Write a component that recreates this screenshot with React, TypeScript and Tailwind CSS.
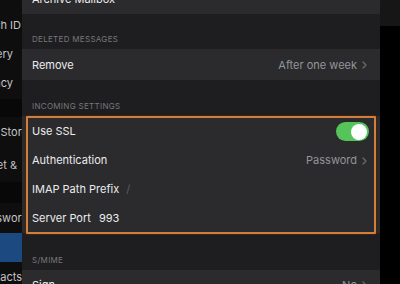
import React from "react";

const Chevron = () => (
  <svg width="5" height="8" viewBox="0 0 5 8" className="ml-[5px]">
    <path d="M1 1 L4 4 L1 7" fill="none" stroke="#6c6c70" strokeWidth="1.2" strokeLinecap="round" strokeLinejoin="round" />
  </svg>
);

const Header = ({ text, h }: { text: string; h: string }) => (
  <div className={`${h} flex items-end pb-[6px] pl-[10px] text-[8px] leading-[8px] tracking-[0.3px] text-[#77777b]`}>
    {text}
  </div>
);

const SideItem = ({ text, h, mr, bg = "" }: { text: string; h: string; mr: string; bg?: string }) => (
  <div className={`${h} ${bg} flex items-center justify-end overflow-hidden`}>
    <span className={`whitespace-nowrap text-[11px] text-[#c4c4c7] ${mr}`}>{text}</span>
  </div>
);

export default function App() {
  return (
    <div
      className="flex h-[284px] w-[400px] overflow-hidden bg-black"
      style={{ fontFamily: "Inter, 'Noto Sans', sans-serif" }}
    >
      {/* sidebar */}
      <div className="flex w-[22px] shrink-0 flex-col bg-[#0e0e0e]">
        <div className="h-[10px] shrink-0" />
        <SideItem text="Touch ID" h="h-[30px] shrink-0" mr="mr-[1px]" />
        <SideItem text="Battery" h="h-[28px] shrink-0" mr="mr-[9px]" />
        <SideItem text="Privacy" h="h-[31px] shrink-0" mr="mr-[9px]" />
        <div className="h-[18px] shrink-0 bg-[#080808]" />
        <SideItem text="App Store" h="h-[31px] shrink-0" mr="-mr-[6px]" />
        <SideItem text="Wallet &" h="h-[34px] shrink-0" mr="mr-[5px]" />
        <div className="h-[21px] shrink-0 bg-[#080808]" />
        <SideItem text="Passwords" h="h-[30px] shrink-0" mr="-mr-[12px]" />
        <div className="h-[29px] shrink-0 bg-[#1c4a80]" />
        <SideItem text="Contacts" h="h-[30px] shrink-0" mr="mr-0" />
      </div>

      {/* main */}
      <div className="relative flex w-[358px] shrink-0 flex-col bg-[#1e1e20] text-[11px] text-[#ececee]">
        <div className="-mt-[16px] flex h-[30px] shrink-0 items-center bg-[#2b2b2d] pl-[10px]">Archive Mailbox</div>
        <Header text="DELETED MESSAGES" h="h-[35px] shrink-0" />
        <div className="flex h-[31px] shrink-0 items-center justify-between bg-[#2b2b2d] pl-[10px] pr-[13px] pt-[1px]">
          <span>Remove</span>
          <span className="flex items-center text-[#949499]">
            After one week
            <Chevron />
          </span>
        </div>
        <Header text="INCOMING SETTINGS" h="h-[36px] shrink-0" />
        <div className="flex shrink-0 flex-col bg-[#2b2b2d] pt-[1px]">
          <div className="flex h-[29px] items-center justify-between pl-[10px] pr-[11px]">
            <span>Use SSL</span>
            <div className="flex h-[19px] w-[33px] items-center justify-end rounded-full bg-[#55c45a] pr-[2px]">
              <div className="h-[16px] w-[16px] rounded-full bg-white" />
            </div>
          </div>
          <div className="flex h-[29px] items-center justify-between pl-[10px] pr-[13px]">
            <span>Authentication</span>
            <span className="flex items-center text-[#949499]">
              Password
              <Chevron />
            </span>
          </div>
          <div className="flex h-[29px] items-center pl-[10px]">
            <span>IMAP Path Prefix</span>
            <span className="ml-[7px] text-[#5c5c60]">/</span>
          </div>
          <div className="flex h-[29px] items-center pl-[10px]">
            <span>Server Port</span>
            <span className="ml-[8px]">993</span>
          </div>
        </div>
        <Header text="S/MIME" h="h-[37px] shrink-0" />
        <div className="flex h-[30px] shrink-0 items-center justify-between bg-[#2b2b2d] pl-[10px] pr-[13px]">
          <span>Sign</span>
          <span className="flex items-center text-[#949499]">
            No
            <Chevron />
          </span>
        </div>

        {/* annotation box */}
        <div className="pointer-events-none absolute left-[4px] top-[116px] h-[118px] w-[350px] rounded-[1px] border-2 border-[#d17f3e] shadow-[0_0_0_1px_#3a2414]" />
      </div>

      {/* right edge */}
      <div className="flex flex-1 flex-col">
        <div className="h-[26px] bg-[#161617]" />
        <div className="flex-1 bg-black" />
      </div>
    </div>
  );
}
